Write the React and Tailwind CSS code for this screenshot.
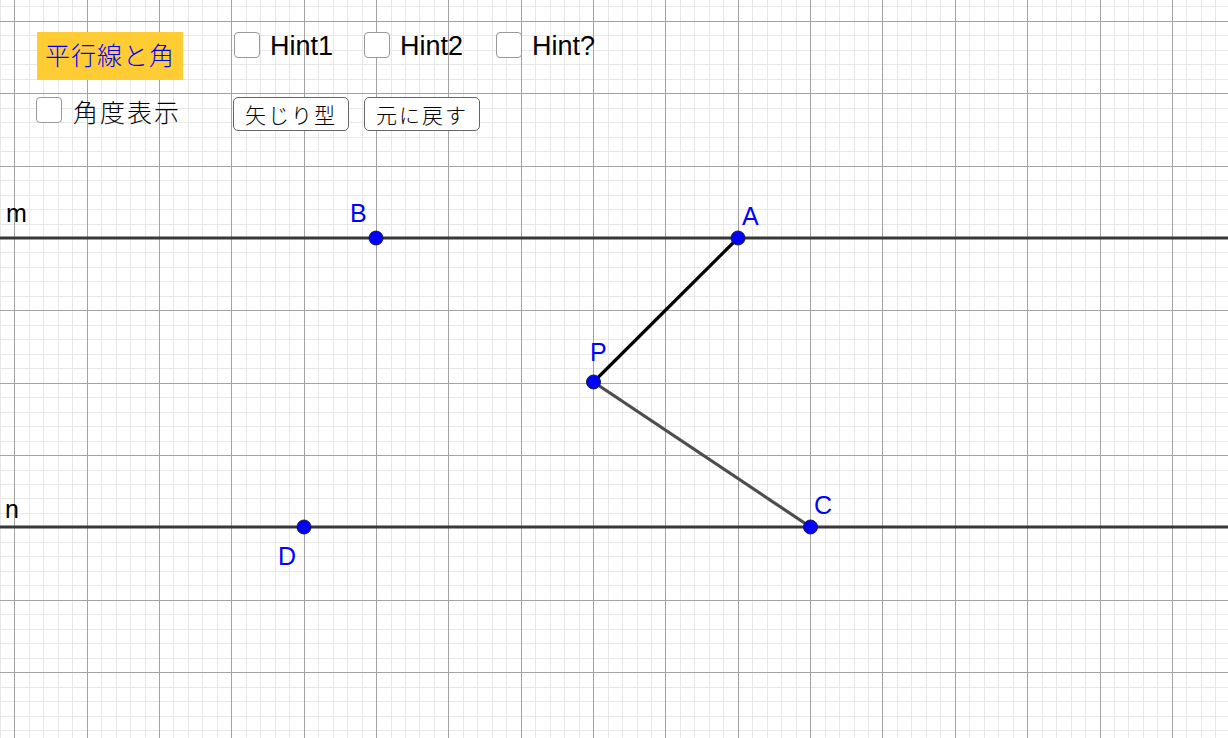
import React from 'react';

const STEP = 72.35;
const X0 = 14.3;
const Y0 = 20.95;
const W = 1228;
const H = 738;

function Grid() {
  const minor = [];
  const major = [];
  const s = STEP / 5;
  for (let k = -1; X0 + k * s < W; k++) {
    const x = Math.round(X0 + k * s) + 0.5;
    (k % 5 === 0 ? major : minor).push(<line key={'v' + k} x1={x} y1={0} x2={x} y2={H} />);
  }
  for (let k = -2; Y0 + k * s < H; k++) {
    const y = Math.round(Y0 + k * s) + 0.5;
    (k % 5 === 0 ? major : minor).push(<line key={'h' + k} x1={0} y1={y} x2={W} y2={y} />);
  }
  return (
    <>
      <g stroke="#e8e8e8" strokeWidth="1">{minor}</g>
      <g stroke="#a3a3a3" strokeWidth="1">{major}</g>
    </>
  );
}

const points = [
  { id: 'A', x: 738, y: 238, lx: 742, ly: 225 },
  { id: 'B', x: 376, y: 238, lx: 350, ly: 222 },
  { id: 'P', x: 593.5, y: 382, lx: 590, ly: 361 },
  { id: 'C', x: 810.5, y: 527, lx: 814, ly: 514 },
  { id: 'D', x: 304, y: 527, lx: 278, ly: 565 },
];

function Canvas() {
  return (
    <svg className="absolute inset-0" width={W} height={H} viewBox={`0 0 ${W} ${H}`}>
      <Grid />
      <line x1="0" y1="238" x2={W} y2="238" stroke="#383838" strokeWidth="3.2" />
      <line x1="0" y1="527" x2={W} y2="527" stroke="#383838" strokeWidth="3.2" />
      <line x1="593.5" y1="382" x2="738" y2="238" stroke="#000" strokeWidth="3.2" />
      <line x1="593.5" y1="382" x2="810.5" y2="527" stroke="#4d4d4d" strokeWidth="3.2" />
      <g fontFamily="'Liberation Sans', Arial, sans-serif" fontSize="25">
        <text x="6" y="222" fill="#000">m</text>
        <text x="5" y="518" fill="#000">n</text>
        {points.map((p) => (
          <text key={p.id} x={p.lx} y={p.ly} fill="#0000ff">{p.id}</text>
        ))}
      </g>
      {points.map((p) => (
        <circle key={p.id} cx={p.x} cy={p.y} r="7" fill="#0000ff" stroke="#1a1a40" strokeWidth="1" />
      ))}
    </svg>
  );
}

function Check({ label, jp }) {
  return (
    <label className="flex items-start">
      <span className="w-[26px] h-[26px] rounded-[4px] border-[1.5px] border-[#999] bg-white shrink-0" />
      {jp ? (
        <span className="ml-[11px] text-[25px] leading-[28px] text-black tracking-[2px] font-['Noto_Sans_CJK_JP',sans-serif] font-light">
          {label}
        </span>
      ) : (
        <span className="ml-[10px] text-[27px] leading-[28px] text-black font-['Liberation_Sans',Arial,sans-serif]">
          {label}
        </span>
      )}
    </label>
  );
}

function Btn({ children }) {
  return (
    <button className="w-[116px] h-[34px] rounded-[5px] border-[1.5px] border-[#666] bg-white text-[21px] leading-none text-black tracking-[2px] font-['Noto_Sans_CJK_JP',sans-serif] font-light">
      {children}
    </button>
  );
}

export default function App() {
  return (
    <div className="relative w-[1228px] h-[738px] overflow-hidden bg-white">
      <Canvas />
      <div className="relative flex flex-col">
        <div className="flex items-start pt-[32px] pl-[37px]">
          <div className="w-[146px] h-[48px] pb-[3px] bg-[#ffcc33] flex items-center justify-center text-[25px] text-[#0000ff] tracking-[1px] font-['Noto_Sans_CJK_JP',sans-serif] font-light">
            平行線と角
          </div>
          <div className="ml-[51px] w-[130px]"><Check label="Hint1" /></div>
          <div className="w-[132px]"><Check label="Hint2" /></div>
          <div><Check label="Hint?" /></div>
        </div>
        <div className="flex items-start pt-[17px] pl-[36px]">
          <div className="w-[197px]"><Check label="角度表示" jp /></div>
          <div className="flex gap-[15px]">
            <Btn>矢じり型</Btn>
            <Btn>元に戻す</Btn>
          </div>
        </div>
      </div>
    </div>
  );
}
